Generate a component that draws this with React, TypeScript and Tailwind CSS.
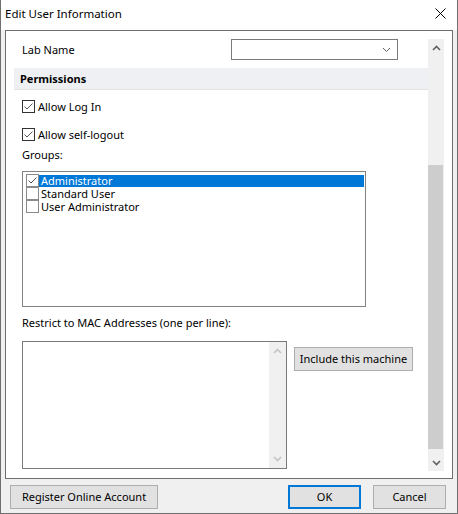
import React from "react"

function Check({ light = false }: { light?: boolean }) {
  return (
    <span
      className={`flex h-[13px] w-[13px] shrink-0 items-center justify-center border bg-white ${
        light ? "border-[#8a8a8a]" : "border-[#333333]"
      }`}
    >
      <svg width="11" height="11" viewBox="0 0 11 11">
        <polyline points="1.5,5.5 4,8 9.5,2.5" fill="none" stroke="#555555" strokeWidth="1" />
      </svg>
    </span>
  )
}

function EmptyCheck() {
  return <span className="h-[13px] w-[13px] shrink-0 border border-[#8a8a8a] bg-white" />
}

function Chevron({ up, color, bold = true }: { up: boolean; color: string; bold?: boolean }) {
  return (
    <svg width="9" height="6" viewBox="0 0 9 6">
      <polyline
        points={up ? "1,5 4.5,1.5 8,5" : "1,1 4.5,4.5 8,1"}
        fill="none"
        stroke={color}
        strokeWidth={bold ? 1.6 : 1}
      />
    </svg>
  )
}

function Button({ label, width, primary = false }: { label: string; width: string; primary?: boolean }) {
  return (
    <button
      className={`flex h-[24px] items-center justify-center whitespace-nowrap bg-[#e1e1e1] text-black ${width} ${
        primary ? "border-2 border-[#0078d7]" : "border border-[#adadad]"
      }`}
    >
      {label}
    </button>
  )
}

export default function App() {
  const groups = [
    { name: "Administrator", checked: true, selected: true },
    { name: "Standard User", checked: false, selected: false },
    { name: "User Administrator", checked: false, selected: false },
  ]

  return (
    <div
      className="flex h-[514px] w-[458px] flex-col border-x border-b border-[#6e6e6e] bg-[#f0f0f0] text-[11px] leading-[16px] text-black"
      style={{ fontFamily: '"Segoe UI", "Noto Sans", sans-serif' }}
    >
      {/* Title bar */}
      <div className="flex h-[30px] shrink-0 items-center justify-between bg-white pb-[3px] pl-[4px] pr-[11px] text-[11.5px]">
        <span>Edit User Information</span>
        <svg width="11" height="11" viewBox="0 0 11 11">
          <path d="M0.5 0.5 L10.5 10.5 M10.5 0.5 L0.5 10.5" stroke="#000" strokeWidth="1" />
        </svg>
      </div>

      {/* Main panel */}
      <div className="mx-[4px] flex h-[449px] shrink-0 border border-[#6e6e6e] bg-white pb-[7px] pl-[8px] pr-[7px] pt-[8px]">
        {/* Content */}
        <div className="flex w-[414px] flex-col overflow-hidden">
          <div className="flex h-[21px] items-center">
            <span className="w-[217px] pl-[8px]">Lab Name</span>
            <div className="flex h-[21px] w-[167px] items-center justify-end border border-[#7a7a7a] pr-[6px]">
              <Chevron up={false} color="#606060" bold={false} />
            </div>
          </div>

          <div className="mt-[8px] flex h-[22px] items-center border-b border-[#e3e3e3] bg-[#eff0f4] pl-[6px] font-bold">
            Permissions
          </div>

          <div className="mt-[10px] flex h-[13px] items-center gap-[3px] pl-[8px]">
            <Check />
            <span>Allow Log In</span>
          </div>
          <div className="mt-[15px] flex h-[13px] items-center gap-[3px] pl-[8px]">
            <Check />
            <span>Allow self-logout</span>
          </div>

          <div className="mt-[6px] pl-[8px]">Groups:</div>

          <div className="ml-[8px] mt-[8px] flex h-[136px] w-[344px] flex-col border border-[#828282] pl-[3px] pr-[1px] pt-[2px] leading-[13px]">
            {groups.map((g) => (
              <div key={g.name} className="flex h-[13px] items-center">
                {g.checked ? <Check light /> : <EmptyCheck />}
                <span
                  className={`flex h-[12px] flex-1 items-center pl-[2px] ${
                    g.selected ? "bg-[#0078d7] text-white" : ""
                  }`}
                >
                  {g.name}
                </span>
              </div>
            ))}
          </div>

          <div className="mt-[8px] pl-[8px]">Restrict to MAC Addresses (one per line):</div>

          <div className="mt-[10px] flex items-start pl-[8px]">
            <div className="flex h-[128px] w-[265px] justify-end border border-[#7a7a7a]">
              <div className="flex w-[17px] flex-col items-center justify-between bg-[#f0f0f0] py-[6px]">
                <Chevron up color="#c4c4c4" />
                <Chevron up={false} color="#c4c4c4" />
              </div>
            </div>
            <div className="ml-[7px] mt-[6px]">
              <Button label="Include this machine" width="w-[119px]" />
            </div>
          </div>
        </div>

        {/* Vertical scrollbar */}
        <div className="flex w-[16px] flex-col bg-[#f0f0f0]">
          <div className="flex h-[17px] items-center justify-center">
            <Chevron up color="#606060" />
          </div>
          <div className="flex flex-1 flex-col">
            <div className="h-[109px]" />
            <div className="h-[284px] w-[15px] bg-[#cdcdcd]" />
          </div>
          <div className="flex h-[17px] items-center justify-center">
            <Chevron up={false} color="#606060" />
          </div>
        </div>
      </div>

      {/* Footer buttons */}
      <div className="flex items-start px-[9px] pt-[6px]">
        <Button label="Register Online Account" width="w-[148px]" />
        <div className="ml-auto flex gap-[12px] pr-[2px]">
          <Button label="OK" width="w-[73px]" primary />
          <Button label="Cancel" width="w-[73px]" />
        </div>
      </div>
    </div>
  )
}
